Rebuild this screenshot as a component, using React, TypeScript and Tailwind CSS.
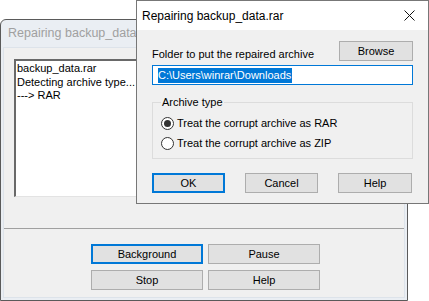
import React from 'react';

const FONT = { fontFamily: '"Liberation Sans", Arial, sans-serif' };

function Button({ label, focused = false, className = '' }: { label: string; focused?: boolean; className?: string }) {
  return (
    <div
      className={`flex h-5 items-center justify-center bg-[#e1e1e1] text-[11px] text-black ${
        focused ? 'border-2 border-[#0078d7]' : 'border border-[#adadad]'
      } ${className}`}
    >
      {label}
    </div>
  );
}

function Radio({ checked, label }: { checked: boolean; label: string }) {
  return (
    <div className="flex h-[13px] items-center gap-[3px] text-[11px] leading-[13px] text-black">
      <div className="flex h-[13px] w-[13px] items-center justify-center rounded-full border border-[#333] bg-white">
        {checked && <div className="h-[7px] w-[7px] rounded-full bg-[#333]" />}
      </div>
      <span>{label}</span>
    </div>
  );
}

// Progress window behind the dialog
function ProgressWindow() {
  return (
    <div className="absolute left-0 top-[19px] flex h-[282px] w-[408px] flex-col rounded-t-[6px] border border-[#5a5a5a] bg-[#eaeef3]">
      {/* Title bar */}
      <div className="flex h-[27px] items-center pl-[7px] text-[12.5px] text-[#a0a0a0]">
        Repairing backup_data.rar
      </div>
      {/* Client area */}
      <div className="mx-[2px] mb-[2px] flex flex-1 flex-col border border-[#dde3ea] bg-[#f0f0f0]">
        <div className="ml-[10px] mt-[11px] h-[138px] w-[380px] border-l-2 border-t-2 border-b border-r border-l-[#696969] border-t-[#696969] border-b-[#e3e3e3] border-r-[#e3e3e3] bg-white px-[1px] pt-[1px] text-[11px] leading-[13.5px] text-black">
          <div>backup_data.rar</div>
          <div>Detecting archive type...</div>
          <div>---&gt; RAR</div>
        </div>
        <div className="mt-[31px] h-px bg-[#a0a0a0]" />
        <div className="ml-[87px] mt-[15px] grid w-[229px] grid-cols-2 gap-x-[5px] gap-y-[6px]">
          <Button label="Background" focused />
          <Button label="Pause" />
          <Button label="Stop" />
          <Button label="Help" />
        </div>
      </div>
    </div>
  );
}

// Repair options dialog in front
function RepairDialog() {
  return (
    <div className="absolute left-[136px] top-0 flex h-[204px] w-[293px] flex-col border border-[#777] bg-[#f0f0f0]">
      <div className="flex h-[29px] items-center justify-between bg-white pl-[5px] pr-[12px] text-[12px] text-black">
        <span>Repairing backup_data.rar</span>
        <svg width="11" height="11" viewBox="0 0 11 11" className="mr-[1px]">
          <path d="M0.5 0.5 L10.5 10.5 M10.5 0.5 L0.5 10.5" stroke="#111" strokeWidth="1" fill="none" />
        </svg>
      </div>
      <div className="flex flex-col px-[15px]">
        <div className="mt-[11px] flex items-end justify-between">
          <span className="mb-[-1px] text-[11px] text-black">Folder to put the repaired archive</span>
          <Button label="Browse" className="w-[74px]" />
        </div>
        <div className="mt-[4px] flex h-[20px] w-[261px] items-center border border-[#0078d7] bg-white px-[5px]">
          <span className="bg-[#0078d7] pr-[1px] text-[11px] leading-[15px] text-white">C:\Users\winrar\Downloads</span>
        </div>
        <fieldset className="mt-[11px] h-[63px] w-[261px] border border-[#dcdcdc] pl-[8px] pt-[9px]">
          <legend className="px-[1px] text-[11px] leading-[12px] text-black">Archive type</legend>
          <div className="flex flex-col gap-[7px]">
            <Radio checked label="Treat the corrupt archive as RAR" />
            <Radio checked={false} label="Treat the corrupt archive as ZIP" />
          </div>
        </fieldset>
        <div className="mt-[14px] flex w-[260px] justify-between">
          <Button label="OK" focused className="w-[73px]" />
          <Button label="Cancel" className="w-[73px]" />
          <Button label="Help" className="w-[74px]" />
        </div>
      </div>
    </div>
  );
}

export default function App() {
  return (
    <div className="relative h-[301px] w-[429px] overflow-hidden bg-white" style={FONT}>
      <ProgressWindow />
      <RepairDialog />
    </div>
  );
}
